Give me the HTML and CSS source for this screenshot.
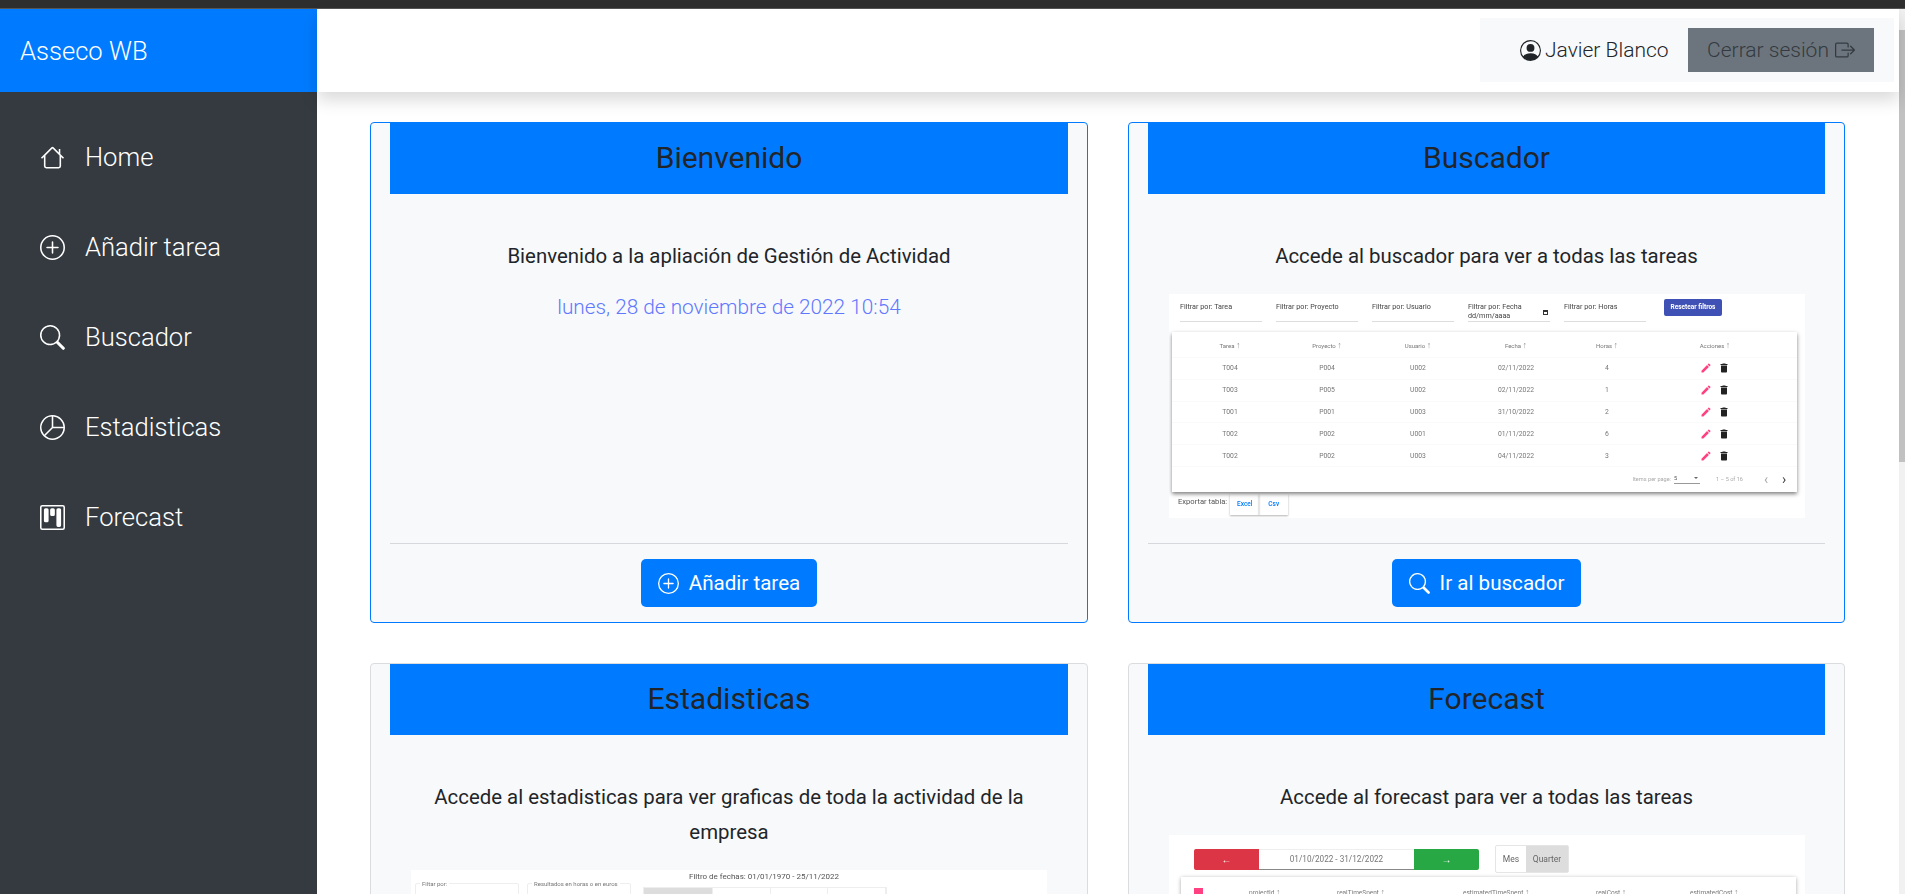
FILE: index.html
```html
<!DOCTYPE html>
<html lang="es">
<head>
    <meta charset="UTF-8">
    <meta name="viewport" content="width=device-width, initial-scale=1.0">
    <title>Asseco WB</title>
    <link rel="stylesheet" href="styles.css">
</head>
<body>
    <svg class="icon-defs">
        <symbol id="i-edit" viewBox="0 0 24 24"><path d="M3 17.250V21h3.750L17.810 9.940l-3.750-3.750L3 17.250zM20.710 7.040c.39-.39.39-1.020 0-1.410l-2.340-2.340c-.39-.39-1.020-.39-1.410 0l-1.830 1.830 3.750 3.750 1.830-1.830z"/></symbol>
        <symbol id="i-delete" viewBox="0 0 24 24"><path d="M6 19c0 1.100.9 2 2 2h8c1.100 0 2-.9 2-2V7H6v12zM19 4h-3.500l-1-1h-5l-1 1H5v2h14V4z"/></symbol>
    </svg>
    <div class="topline"></div>
    <div class="app">
        <aside class="sidebar">
            <div class="brand">Asseco WB</div>
            <nav class="side-menu">
                <a class="side-link">
                    <svg class="side-icon" viewBox="0 0 16 16" fill="currentColor"><path d="M8.700 1.500a1 1 0 0 0-1.400 0L.6 8.100l.7.7L2.500 7.700V13.500A1.500 1.500 0 0 0 4 15h8a1.500 1.500 0 0 0 1.500-1.500V7.700l1.200 1.100.7-.7-2.400-2.400V2.500h-1v2.300zM12.500 6.700V13.500a.5.5 0 0 1-.5.5H4a.5.5 0 0 1-.5-.5V6.700L8 2.200z"/></svg>
                    <span>Home</span>
                </a>
                <a class="side-link">
                    <svg class="side-icon" viewBox="0 0 16 16" fill="currentColor"><path d="M8 15A7 7 0 1 1 8 1a7 7 0 0 1 0 14zm0 1A8 8 0 1 0 8 0a8 8 0 0 0 0 16z"/><path d="M8 4a.5.5 0 0 1 .5.5v3h3a.5.5 0 0 1 0 1h-3v3a.5.5 0 0 1-1 0v-3h-3a.5.5 0 0 1 0-1h3v-3A.5.5 0 0 1 8 4z"/></svg>
                    <span>Añadir tarea</span>
                </a>
                <a class="side-link">
                    <svg class="side-icon" viewBox="0 0 16 16" fill="currentColor"><path d="M11.742 10.344a6.500 6.500 0 1 0-1.397 1.398l3.850 3.850a1 1 0 0 0 1.415-1.414l-3.850-3.850zM12 6.500a5.500 5.500 0 1 1-11 0 5.500 5.500 0 0 1 11 0z"/></svg>
                    <span>Buscador</span>
                </a>
                <a class="side-link">
                    <svg class="side-icon" viewBox="0 0 16 16" fill="currentColor"><path d="M7.500 1.018a7 7 0 0 0-4.790 11.566L7.500 7.793V1.018zm1 0V7.500h6.482A7 7 0 0 0 8.500 1.018zM14.982 8.500H8.207l-4.790 4.790A7 7 0 0 0 14.982 8.500zM0 8a8 8 0 1 1 16 0A8 8 0 0 1 0 8z"/></svg>
                    <span>Estadisticas</span>
                </a>
                <a class="side-link">
                    <svg class="side-icon" viewBox="0 0 16 16" fill="currentColor"><path d="M14.500 1a.5.5 0 0 1 .5.5v13a.5.5 0 0 1-.5.5h-13a.5.5 0 0 1-.5-.5v-13a.5.5 0 0 1 .5-.5h13zm-13-1A1.500 1.500 0 0 0 0 1.500v13A1.500 1.500 0 0 0 1.500 16h13a1.500 1.500 0 0 0 1.500-1.500v-13A1.500 1.500 0 0 0 14.500 0h-13z"/><path d="M6.500 3a1 1 0 0 1 1-1h1a1 1 0 0 1 1 1v3a1 1 0 0 1-1 1h-1a1 1 0 0 1-1-1V3zm-4 0a1 1 0 0 1 1-1h1a1 1 0 0 1 1 1v7a1 1 0 0 1-1 1h-1a1 1 0 0 1-1-1V3zm8 0a1 1 0 0 1 1-1h1a1 1 0 0 1 1 1v10a1 1 0 0 1-1 1h-1a1 1 0 0 1-1-1V3z"/></svg>
                    <span>Forecast</span>
                </a>
            </nav>
        </aside>

        <div class="main">
            <header class="navbar">
                <div class="user-box">
                    <svg class="user-icon" viewBox="0 0 16 16" fill="currentColor"><path d="M11 6a3 3 0 1 1-6 0 3 3 0 0 1 6 0z"/><path fill-rule="evenodd" d="M0 8a8 8 0 1 1 16 0A8 8 0 0 1 0 8zm8-7a7 7 0 0 0-5.468 11.370C3.242 11.226 4.805 10 8 10s4.757 1.225 5.468 2.370A7 7 0 0 0 8 1z"/></svg>
                    <span class="user-name">Javier Blanco</span>
                    <a class="logout-btn">
                        <span>Cerrar sesión</span>
                        <svg class="logout-icon" viewBox="0 0 16 16" fill="currentColor"><path fill-rule="evenodd" d="M10 12.500a.5.5 0 0 1-.5.5h-8a.5.5 0 0 1-.5-.5v-9a.5.5 0 0 1 .5-.5h8a.5.5 0 0 1 .5.5v2a.5.5 0 0 0 1 0v-2A1.500 1.500 0 0 0 9.500 2h-8A1.500 1.500 0 0 0 0 3.500v9A1.500 1.500 0 0 0 1.500 14h8a1.500 1.500 0 0 0 1.500-1.500v-2a.5.5 0 0 0-1 0v2z"/><path fill-rule="evenodd" d="M15.854 8.354a.5.5 0 0 0 0-.708l-3-3a.5.5 0 0 0-.708.708L14.293 7.500H5.500a.5.5 0 0 0 0 1h8.793l-2.147 2.146a.5.5 0 0 0 .708.708l3-3z"/></svg>
                    </a>
                </div>
            </header>

            <main class="content">
                <section class="card card-active">
                    <h2 class="card-title">Bienvenido</h2>
                    <div class="card-body">
                        <p class="card-text">Bienvenido a la apliación de Gestión de Actividad</p>
                        <p class="card-date">lunes, 28 de noviembre de 2022 10:54</p>
                    </div>
                    <div class="card-foot">
                        <a class="blue-btn">
                            <svg class="btn-icon" viewBox="0 0 16 16" fill="currentColor"><path d="M8 15A7 7 0 1 1 8 1a7 7 0 0 1 0 14zm0 1A8 8 0 1 0 8 0a8 8 0 0 0 0 16z"/><path d="M8 4a.5.5 0 0 1 .5.5v3h3a.5.5 0 0 1 0 1h-3v3a.5.5 0 0 1-1 0v-3h-3a.5.5 0 0 1 0-1h3v-3A.5.5 0 0 1 8 4z"/></svg>
                            <span>Añadir tarea</span>
                        </a>
                    </div>
                </section>

                <section class="card card-active">
                    <h2 class="card-title">Buscador</h2>
                    <div class="card-body">
                        <p class="card-text">Accede al buscador para ver a todas las tareas</p>
                        <div class="shot shot-search">
                            <div class="filters">
                                <div class="filter">Filtrar por: Tarea</div>
                                <div class="filter">Filtrar por: Proyecto</div>
                                <div class="filter">Filtrar por: Usuario</div>
                                <div class="filter filter-date">Filtrar por: Fecha<br>dd/mm/aaaa<i class="cal"></i></div>
                                <div class="filter">Filtrar por: Horas</div>
                                <div class="reset">Resetear filtros</div>
                            </div>
                            <div class="mini-table">
                                <div class="mini-row mini-head"><span>Tarea <i class="up">↑</i></span><span>Proyecto <i class="up">↑</i></span><span>Usuario <i class="up">↑</i></span><span>Fecha <i class="up">↑</i></span><span>Horas <i class="up">↑</i></span><span>Acciones <i class="up">↑</i></span></div>
                                <div class="mini-row"><span>T004</span><span>P004</span><span>U002</span><span>02/11/2022</span><span>4</span><span class="acts"><svg class="pen"><use href="#i-edit"/></svg><svg class="bin"><use href="#i-delete"/></svg></span></div>
                                <div class="mini-row"><span>T003</span><span>P005</span><span>U002</span><span>02/11/2022</span><span>1</span><span class="acts"><svg class="pen"><use href="#i-edit"/></svg><svg class="bin"><use href="#i-delete"/></svg></span></div>
                                <div class="mini-row"><span>T001</span><span>P001</span><span>U003</span><span>31/10/2022</span><span>2</span><span class="acts"><svg class="pen"><use href="#i-edit"/></svg><svg class="bin"><use href="#i-delete"/></svg></span></div>
                                <div class="mini-row"><span>T002</span><span>P002</span><span>U001</span><span>01/11/2022</span><span>6</span><span class="acts"><svg class="pen"><use href="#i-edit"/></svg><svg class="bin"><use href="#i-delete"/></svg></span></div>
                                <div class="mini-row"><span>T002</span><span>P002</span><span>U003</span><span>04/11/2022</span><span>3</span><span class="acts"><svg class="pen"><use href="#i-edit"/></svg><svg class="bin"><use href="#i-delete"/></svg></span></div>
                                <div class="mini-pager"><span>Items per page:</span><span class="pager-select">5<i class="caret"></i></span><span class="pager-count">1 – 5 of 16</span><span class="pager-arrow pager-off">‹</span><span class="pager-arrow">›</span></div>
                            </div>
                            <div class="export"><span>Exportar tabla:</span><b>Excel</b><b>Csv</b></div>
                        </div>
                    </div>
                    <div class="card-foot">
                        <a class="blue-btn">
                            <svg class="btn-icon" viewBox="0 0 16 16" fill="currentColor"><path d="M11.742 10.344a6.500 6.500 0 1 0-1.397 1.398l3.850 3.850a1 1 0 0 0 1.415-1.414l-3.850-3.850zM12 6.500a5.500 5.500 0 1 1-11 0 5.500 5.500 0 0 1 11 0z"/></svg>
                            <span>Ir al buscador</span>
                        </a>
                    </div>
                </section>

                <section class="card">
                    <h2 class="card-title">Estadisticas</h2>
                    <div class="card-body">
                        <p class="card-text">Accede al estadisticas para ver graficas de toda la actividad de la empresa</p>
                        <div class="shot shot-stats">
                            <fieldset class="legend-box"><legend>Filtar por:</legend></fieldset>
                            <fieldset class="legend-box"><legend>Resultados en horas o en euros</legend></fieldset>
                            <div class="stats-side">
                                <div class="stats-range">Filtro de fechas: 01/01/1970 - 25/11/2022</div>
                                <div class="stats-tabs"><i class="tab-on"></i><i></i><i></i><i></i></div>
                            </div>
                        </div>
                    </div>
                </section>

                <section class="card">
                    <h2 class="card-title">Forecast</h2>
                    <div class="card-body">
                        <p class="card-text">Accede al forecast para ver a todas las tareas</p>
                        <div class="shot shot-forecast">
                            <div class="fc-bar">
                                <div class="fc-range">
                                    <span class="fc-prev">←</span>
                                    <span class="fc-dates">01/10/2022 - 31/12/2022</span>
                                    <span class="fc-next">→</span>
                                </div>
                                <div class="fc-toggle"><span>Mes</span><span class="fc-on">Quarter</span></div>
                            </div>
                            <div class="fc-table">
                                <i class="fc-check"></i>
                                <span class="fc-col-a">projectId <i class="up">↑</i></span>
                                <span class="fc-col-b">realTimeSpent <i class="up">↑</i></span>
                                <span class="fc-col-c">estimatedTimeSpent <i class="up">↑</i></span>
                                <span class="fc-col-d">realCost <i class="up">↑</i></span>
                                <span>estimatedCost <i class="up">↑</i></span>
                            </div>
                        </div>
                    </div>
                </section>
            </main>
        </div>
        <div class="scroll-track"><div class="scroll-thumb"></div></div>
    </div>
</body>
</html>
```

FILE: styles.css
```css
* {
    box-sizing: border-box;
}
html, body {
    height: 100%;
    margin: 0;
    overflow: hidden;
}
body {
    display: flex;
    flex-direction: column;
    font-family: Roboto, "Liberation Sans", sans-serif;
    color: #212529;
    background-color: #ffffff;
}
.icon-defs {
    display: none;
}
.topline {
    height: 9px;
    flex: none;
    background-color: #2e2e2e;
    border-bottom: 1px solid #555555;
}
.app {
    flex: 1;
    display: flex;
    min-height: 0;
}

/* sidebar */
.sidebar {
    width: 317px;
    flex: none;
    background-color: #343a40;
    color: #ffffff;
}
.brand {
    height: 83px;
    padding-left: 20px;
    display: flex;
    align-items: center;
    background-color: #007bff;
    font-size: 25.600px;
    font-weight: 300;
}
.side-menu {
    padding-top: 20px;
}
.side-link {
    height: 90px;
    padding-left: 40px;
    display: flex;
    align-items: center;
    gap: 20px;
    font-size: 25.600px;
    font-weight: 300;
}
.side-icon {
    width: 25px;
    height: 25px;
}

/* navbar */
.main {
    flex: 1;
    min-width: 0;
    display: flex;
    flex-direction: column;
}
.navbar {
    height: 83px;
    flex: none;
    padding: 9px 5px 10px 0;
    display: flex;
    justify-content: flex-end;
    background-color: #ffffff;
    box-shadow: 0 8px 16px rgba(0, 0, 0, 0.15);
    position: relative;
}
.user-box {
    width: 414px;
    padding: 10px 20px 10px 40px;
    display: flex;
    align-items: center;
    background-color: #f8f9fa;
    font-size: 21px;
    font-weight: 300;
}
.user-icon {
    width: 21px;
    height: 21px;
    margin-right: 4px;
    flex: none;
}
.user-name {
    white-space: nowrap;
}
.logout-btn {
    width: 186px;
    height: 44px;
    margin-left: auto;
    flex: none;
    display: flex;
    align-items: center;
    justify-content: center;
    gap: 6px;
    background-color: #6c757d;
    color: #343a40;
}
.logout-icon {
    width: 20px;
    height: 20px;
}

/* cards */
.content {
    flex: 1;
    min-height: 0;
    overflow: hidden;
    padding: 30px 0 0 53px;
    display: grid;
    grid-template-columns: 718px 717px;
    grid-template-rows: 501px 501px;
    column-gap: 40px;
    row-gap: 40px;
}
.card {
    display: flex;
    flex-direction: column;
    padding: 0 19px;
    background-color: #f8f9fa;
    border: 1px solid #dadce0;
    border-radius: 4px;
}
.card-active {
    border-color: #007bff;
}
.card-title {
    height: 71px;
    margin: 0;
    padding-bottom: 3px;
    flex: none;
    display: flex;
    align-items: center;
    justify-content: center;
    background-color: #007bff;
    font-size: 30px;
    font-weight: 400;
}
.card-body {
    flex: 1;
    min-height: 0;
    padding: 45px 20px 0;
    text-align: center;
}
.card-text {
    margin: 0;
    line-height: 35px;
    font-size: 20.400px;
}
.card-date {
    margin: 15px 0 0;
    line-height: 36px;
    font-size: 20.800px;
    font-weight: 300;
    color: #5f78ff;
}
.card-foot {
    height: 79px;
    flex: none;
    display: flex;
    justify-content: center;
    padding-top: 15px;
    border-top: 1px solid #d6d8db;
}
.blue-btn {
    height: 48px;
    padding: 0 17px;
    display: flex;
    align-items: center;
    gap: 10px;
    background-color: #007bff;
    border-radius: 5px;
    color: #ffffff;
    font-size: 20.600px;
}
.btn-icon {
    width: 21px;
    height: 21px;
}

/* screenshots inside the cards */
.shot {
    width: 636px;
    margin: 20px 0 0 1px;
    background-color: #ffffff;
    overflow: hidden;
    text-align: left;
    color: #555555;
    filter: blur(0.4px);
}
.up {
    font-style: normal;
    font-size: 9px;
    color: #999999;
}
.shot-search {
    height: 224px;
}
.filters {
    display: flex;
    padding-left: 11px;
    font-size: 7.200px;
    height: 38px;
}
.filter {
    width: 82px;
    height: 28px;
    margin-right: 14px;
    padding-top: 8px;
    line-height: 9px;
    border-bottom: 1px solid #dddddd;
    color: #444444;
    position: relative;
}
.cal {
    position: absolute;
    right: 2px;
    top: 16px;
    width: 5px;
    height: 5px;
    border: 1px solid #333333;
    border-top-width: 2px;
}
.reset {
    width: 58px;
    height: 17px;
    margin: 5px 0 0 4px;
    background-color: #3f51b5;
    border-radius: 2px;
    color: #ffffff;
    font-size: 6.500px;
    font-weight: 700;
    line-height: 17px;
    text-align: center;
}
.mini-table {
    width: 625px;
    height: 160px;
    margin-left: 3px;
    background-color: #ffffff;
    box-shadow: 0 2px 4px rgba(0, 0, 0, 0.5);
    font-size: 6.800px;
    color: #777777;
}
.mini-row {
    height: 21.800px;
    display: grid;
    grid-template-columns: 116px 78px 104px 92px 90px 126px;
    align-items: center;
    border-bottom: 1px solid #fafafa;
    text-align: center;
}
.mini-head {
    height: 26px;
    color: #777777;
    font-size: 6px;
}
.acts {
    display: flex;
    justify-content: center;
    gap: 6px;
}
.pen {
    width: 12px;
    height: 12px;
    fill: #ff4081;
}
.bin {
    width: 12px;
    height: 12px;
    fill: #222222;
}
.mini-pager {
    height: 25px;
    display: flex;
    justify-content: flex-end;
    align-items: center;
    padding-right: 4px;
    font-size: 5.600px;
    color: #aaaaaa;
}
.pager-select {
    width: 26px;
    margin: 0 16px 0 3px;
    padding-bottom: 2px;
    display: flex;
    align-items: center;
    justify-content: space-between;
    border-bottom: 1px solid #999999;
    color: #555555;
}
.caret {
    margin-right: 2px;
    border: 2px solid transparent;
    border-top-color: #666666;
    border-bottom: 0;
}
.pager-count {
    margin-right: 14px;
}
.pager-arrow {
    width: 18px;
    text-align: center;
    font-size: 14px;
    color: #444444;
}
.pager-off {
    color: #aaaaaa;
}
.export {
    display: flex;
    align-items: flex-start;
    padding: 2px 0 0 9px;
    font-size: 7.600px;
    color: #555555;
}
.export span {
    margin: 3px 3px 0 0;
}
.export b {
    width: 29px;
    height: 21px;
    line-height: 21px;
    text-align: center;
    font-weight: 500;
    font-size: 6.500px;
    color: #007bff;
    box-shadow: 0 1px 2px rgba(0, 0, 0, 0.3);
}
.shot-stats {
    height: 60px;
    padding-left: 4px;
    display: flex;
    font-size: 6px;
    color: #777777;
}
.legend-box {
    width: 104px;
    height: 40px;
    min-width: 0;
    margin: 10px 8px 0 0;
    padding: 0;
    border: 1px solid #eeeeee;
    border-radius: 2px;
}
.legend-box legend {
    margin-left: 4px;
    padding: 0 2px;
    line-height: 7px;
}
.stats-side {
    flex: 1;
    margin-left: 4px;
}
.stats-range {
    margin: 2px 0 0 46px;
    font-size: 8px;
    color: #555555;
}
.stats-tabs {
    width: 244px;
    height: 24px;
    margin-top: 6px;
    display: flex;
    border: 1px solid #eeeeee;
}
.stats-tabs i {
    flex: 1;
    border-right: 1px solid #eeeeee;
}
.stats-tabs .tab-on {
    flex: 1.200;
    background-color: #dddddd;
}
.shot-forecast {
    height: 60px;
    padding: 10px 0 0 25px;
}
.fc-bar {
    height: 28px;
    display: flex;
    align-items: center;
}
.fc-range {
    width: 285px;
    height: 21px;
    display: flex;
    font-size: 8.200px;
    text-align: center;
    line-height: 21px;
}
.fc-prev, .fc-next {
    width: 65px;
    font-size: 10px;
    color: #ffffff;
}
.fc-prev {
    background-color: #dc3545;
    border-radius: 2px 0 0 2px;
}
.fc-next {
    background-color: #28a745;
    border-radius: 0 2px 2px 0;
}
.fc-dates {
    flex: 1;
    border-top: 1px solid #eeeeee;
    border-bottom: 1px solid #888888;
    line-height: 19px;
    color: #777777;
}
.fc-toggle {
    width: 74px;
    height: 28px;
    margin-left: 16px;
    display: flex;
    font-size: 8.500px;
    line-height: 26px;
    text-align: center;
    border: 1px solid #e5e5e5;
    border-radius: 2px;
    color: #666666;
}
.fc-toggle span {
    flex: none;
    width: 30px;
}
.fc-toggle .fc-on {
    width: 42px;
    background-color: #dddddd;
}
.fc-table {
    width: 615px;
    height: 30px;
    margin: 4px 0 0 -13px;
    padding: 11px 0 0 13px;
    display: flex;
    box-shadow: 0 1px 4px rgba(0, 0, 0, 0.35);
    font-size: 6.500px;
    color: #777777;
}
.fc-check {
    width: 9px;
    height: 9px;
    margin-right: 46px;
    background-color: #ff4081;
}
.fc-table span {
    line-height: 9px;
}
.fc-col-a {
    width: 88px;
}
.fc-col-b {
    width: 126px;
}
.fc-col-c {
    width: 133px;
}
.fc-col-d {
    width: 94px;
}

/* scrollbar */
.scroll-track {
    width: 6px;
    flex: none;
    background-color: #f1f1f1;
}
.scroll-thumb {
    width: 100%;
    height: 432px;
    margin-top: 21px;
    background-color: #c1c1c1;
}
```
